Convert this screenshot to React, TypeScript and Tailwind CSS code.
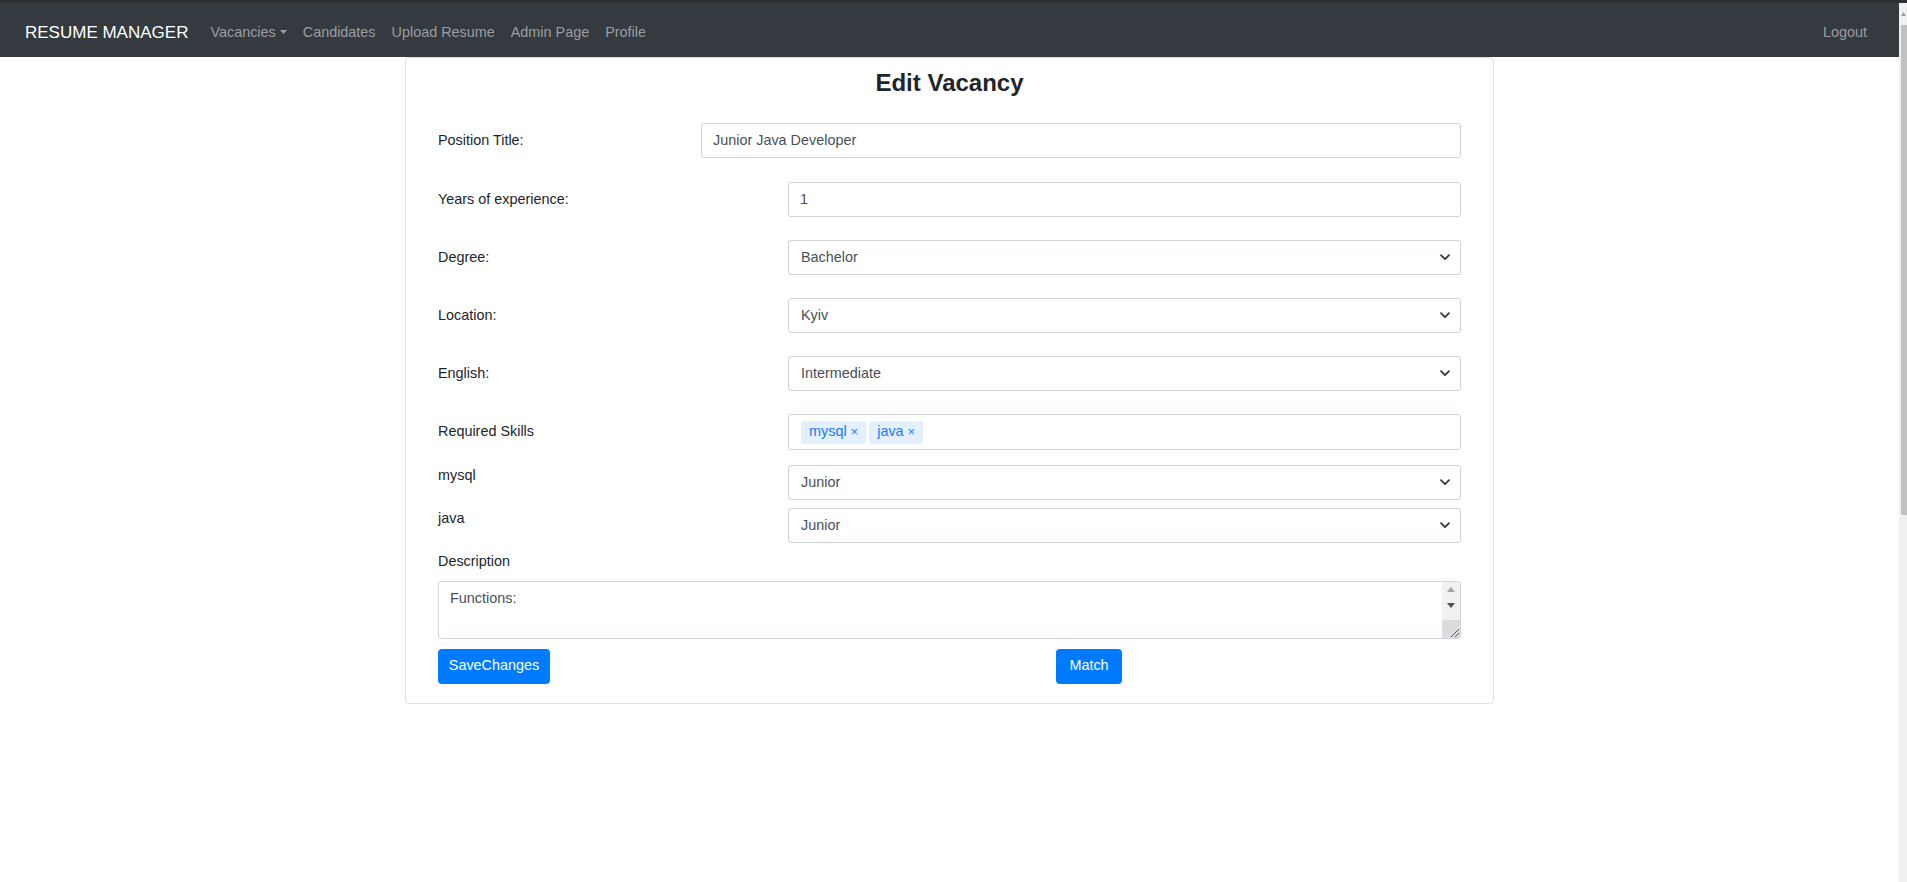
import React from 'react';

const font = { fontFamily: '"Liberation Sans", Arial, sans-serif' };

const Chevron = () => (
    <svg width="10" height="7" viewBox="0 0 10 7" className="shrink-0">
        <path d="M1 1.2l4 4 4-4" fill="none" stroke="#343a40" strokeWidth="1.8" strokeLinecap="round" strokeLinejoin="round" />
    </svg>
);

const SelectBox: React.FC<{ value: string; className?: string }> = ({ value, className = '' }) => (
    <div
        className={`flex h-[35px] items-center justify-between rounded-[3px] border border-[#ced4da] bg-white pl-[12px] pr-[10px] text-[#495057] ${className}`}
    >
        <span>{value}</span>
        <Chevron />
    </div>
);

const InputBox: React.FC<{ value: string; className?: string }> = ({ value, className = '' }) => (
    <div
        className={`flex h-[35px] items-center rounded-[3px] border border-[#ced4da] bg-white px-[11px] text-[#495057] ${className}`}
    >
        {value}
    </div>
);

const Tag: React.FC<{ label: string }> = ({ label }) => (
    <span className="flex h-[23px] items-center gap-[4px] rounded-[3px] bg-[#e3f0ff] px-[8px] text-[#1a7bff]">
        {label}
        <span className="text-[13px]">×</span>
    </span>
);

const FormRow: React.FC<{ label: string; labelWidth: string; children: React.ReactNode; className?: string }> = ({
    label,
    labelWidth,
    children,
    className = '',
}) => (
    <div className={`flex items-center ${className}`}>
        <label className={`${labelWidth} shrink-0 text-[#212529]`}>{label}</label>
        <div className="flex-1">{children}</div>
    </div>
);

export default function App() {
    return (
        <div className="flex h-[882px] w-full flex-col overflow-hidden bg-white text-[14.4px] leading-[1.5]" style={font}>
            <div className="h-[3px] w-full bg-[#2e3033]" />
            <div className="flex flex-1">
                <div className="flex flex-1 flex-col">
                    {/* Navbar */}
                    <nav className="flex h-[54px] items-center bg-[#343a40] pl-[25px] pr-[32px] pt-[5px]">
                        <span className="text-[17px] text-white">RESUME MANAGER</span>
                        <div className="ml-[22px] flex items-center gap-[16px] text-[#9a9da0]">
                            <span className="flex items-center gap-[4px]">
                                Vacancies
                                <svg width="7" height="4" viewBox="0 0 7 4">
                                    <path d="M0 0h7L3.5 4z" fill="#9a9da0" />
                                </svg>
                            </span>
                            <span>Candidates</span>
                            <span>Upload Resume</span>
                            <span>Admin Page</span>
                            <span>Profile</span>
                        </div>
                        <span className="ml-auto text-[#9a9da0]">Logout</span>
                    </nav>

                    {/* Card */}
                    <div className="mx-auto w-[1089px] rounded-[4px] border border-[#dfdfdf] px-[32px] pb-[19px] pt-[10px]">
                        <h3 className="h-[29px] text-center text-[24px] font-bold leading-[29px] text-[#212529]">Edit Vacancy</h3>

                        <FormRow label="Position Title:" labelWidth="w-[263px]" className="mt-[26px]">
                            <InputBox value="Junior Java Developer" className="h-[34px]" />
                        </FormRow>
                        <FormRow label="Years of experience:" labelWidth="w-[350px]" className="mt-[24px]">
                            <InputBox value="1" />
                        </FormRow>
                        <FormRow label="Degree:" labelWidth="w-[350px]" className="mt-[23px]">
                            <SelectBox value="Bachelor" />
                        </FormRow>
                        <FormRow label="Location:" labelWidth="w-[350px]" className="mt-[23px]">
                            <SelectBox value="Kyiv" />
                        </FormRow>
                        <FormRow label="English:" labelWidth="w-[350px]" className="mt-[23px]">
                            <SelectBox value="Intermediate" />
                        </FormRow>
                        <FormRow label="Required Skills" labelWidth="w-[350px]" className="mt-[23px]">
                            <div className="flex h-[36px] items-center gap-[3px] rounded-[3px] border border-[#ced4da] bg-white px-[12px]">
                                <Tag label="mysql" />
                                <Tag label="java" />
                            </div>
                        </FormRow>

                        <div className="mt-[15px] flex items-start">
                            <label className="w-[350px] shrink-0 text-[#212529]">mysql</label>
                            <SelectBox value="Junior" className="flex-1" />
                        </div>
                        <div className="mt-[8px] flex items-start">
                            <label className="w-[350px] shrink-0 text-[#212529]">java</label>
                            <SelectBox value="Junior" className="flex-1" />
                        </div>

                        <label className="mt-[8px] block text-[#212529]">Description</label>
                        <div className="mt-[8px] flex h-[58px] overflow-hidden rounded-[3px] border border-[#ced4da] bg-white">
                            <div className="flex-1 px-[11px] py-[6px] text-[#495057]">Functions:</div>
                            <div className="flex w-[18px] flex-col bg-[#f1f1f1]">
                                <div className="flex h-[16px] items-center justify-center">
                                    <svg width="8" height="5" viewBox="0 0 8 5">
                                        <path d="M4 0l4 5H0z" fill="#a3a3a3" />
                                    </svg>
                                </div>
                                <div className="flex h-[16px] items-center justify-center">
                                    <svg width="8" height="5" viewBox="0 0 8 5">
                                        <path d="M0 0h8L4 5z" fill="#505050" />
                                    </svg>
                                </div>
                                <div className="flex-1" />
                                <div className="flex h-[18px] items-end justify-end bg-[#dcdcdc]">
                                    <svg width="12" height="12" viewBox="0 0 12 12">
                                        <path d="M11 3L3 11M11 7L7 11" stroke="#555" strokeWidth="1" />
                                    </svg>
                                </div>
                            </div>
                        </div>

                        <div className="mt-[10px] grid grid-cols-[618px_1fr]">
                            <div>
                                <button className="h-[35px] w-[112px] rounded-[4px] bg-[#007bff] text-white">SaveChanges</button>
                            </div>
                            <div>
                                <button className="h-[35px] w-[66px] rounded-[4px] bg-[#007bff] text-white">Match</button>
                            </div>
                        </div>
                    </div>
                </div>

                {/* Page scrollbar */}
                <div className="flex w-[8px] flex-col bg-[#f0f0f0]">
                    <div className="flex h-[22px] items-center justify-end pr-[1px]">
                        <svg width="5" height="4" viewBox="0 0 5 4">
                            <path d="M2.5 0L5 4H0z" fill="#a0a0a0" />
                        </svg>
                    </div>
                    <div className="ml-[2px] h-[490px] w-[6px] bg-[#c1c1c1]" />
                </div>
            </div>
        </div>
    );
}
